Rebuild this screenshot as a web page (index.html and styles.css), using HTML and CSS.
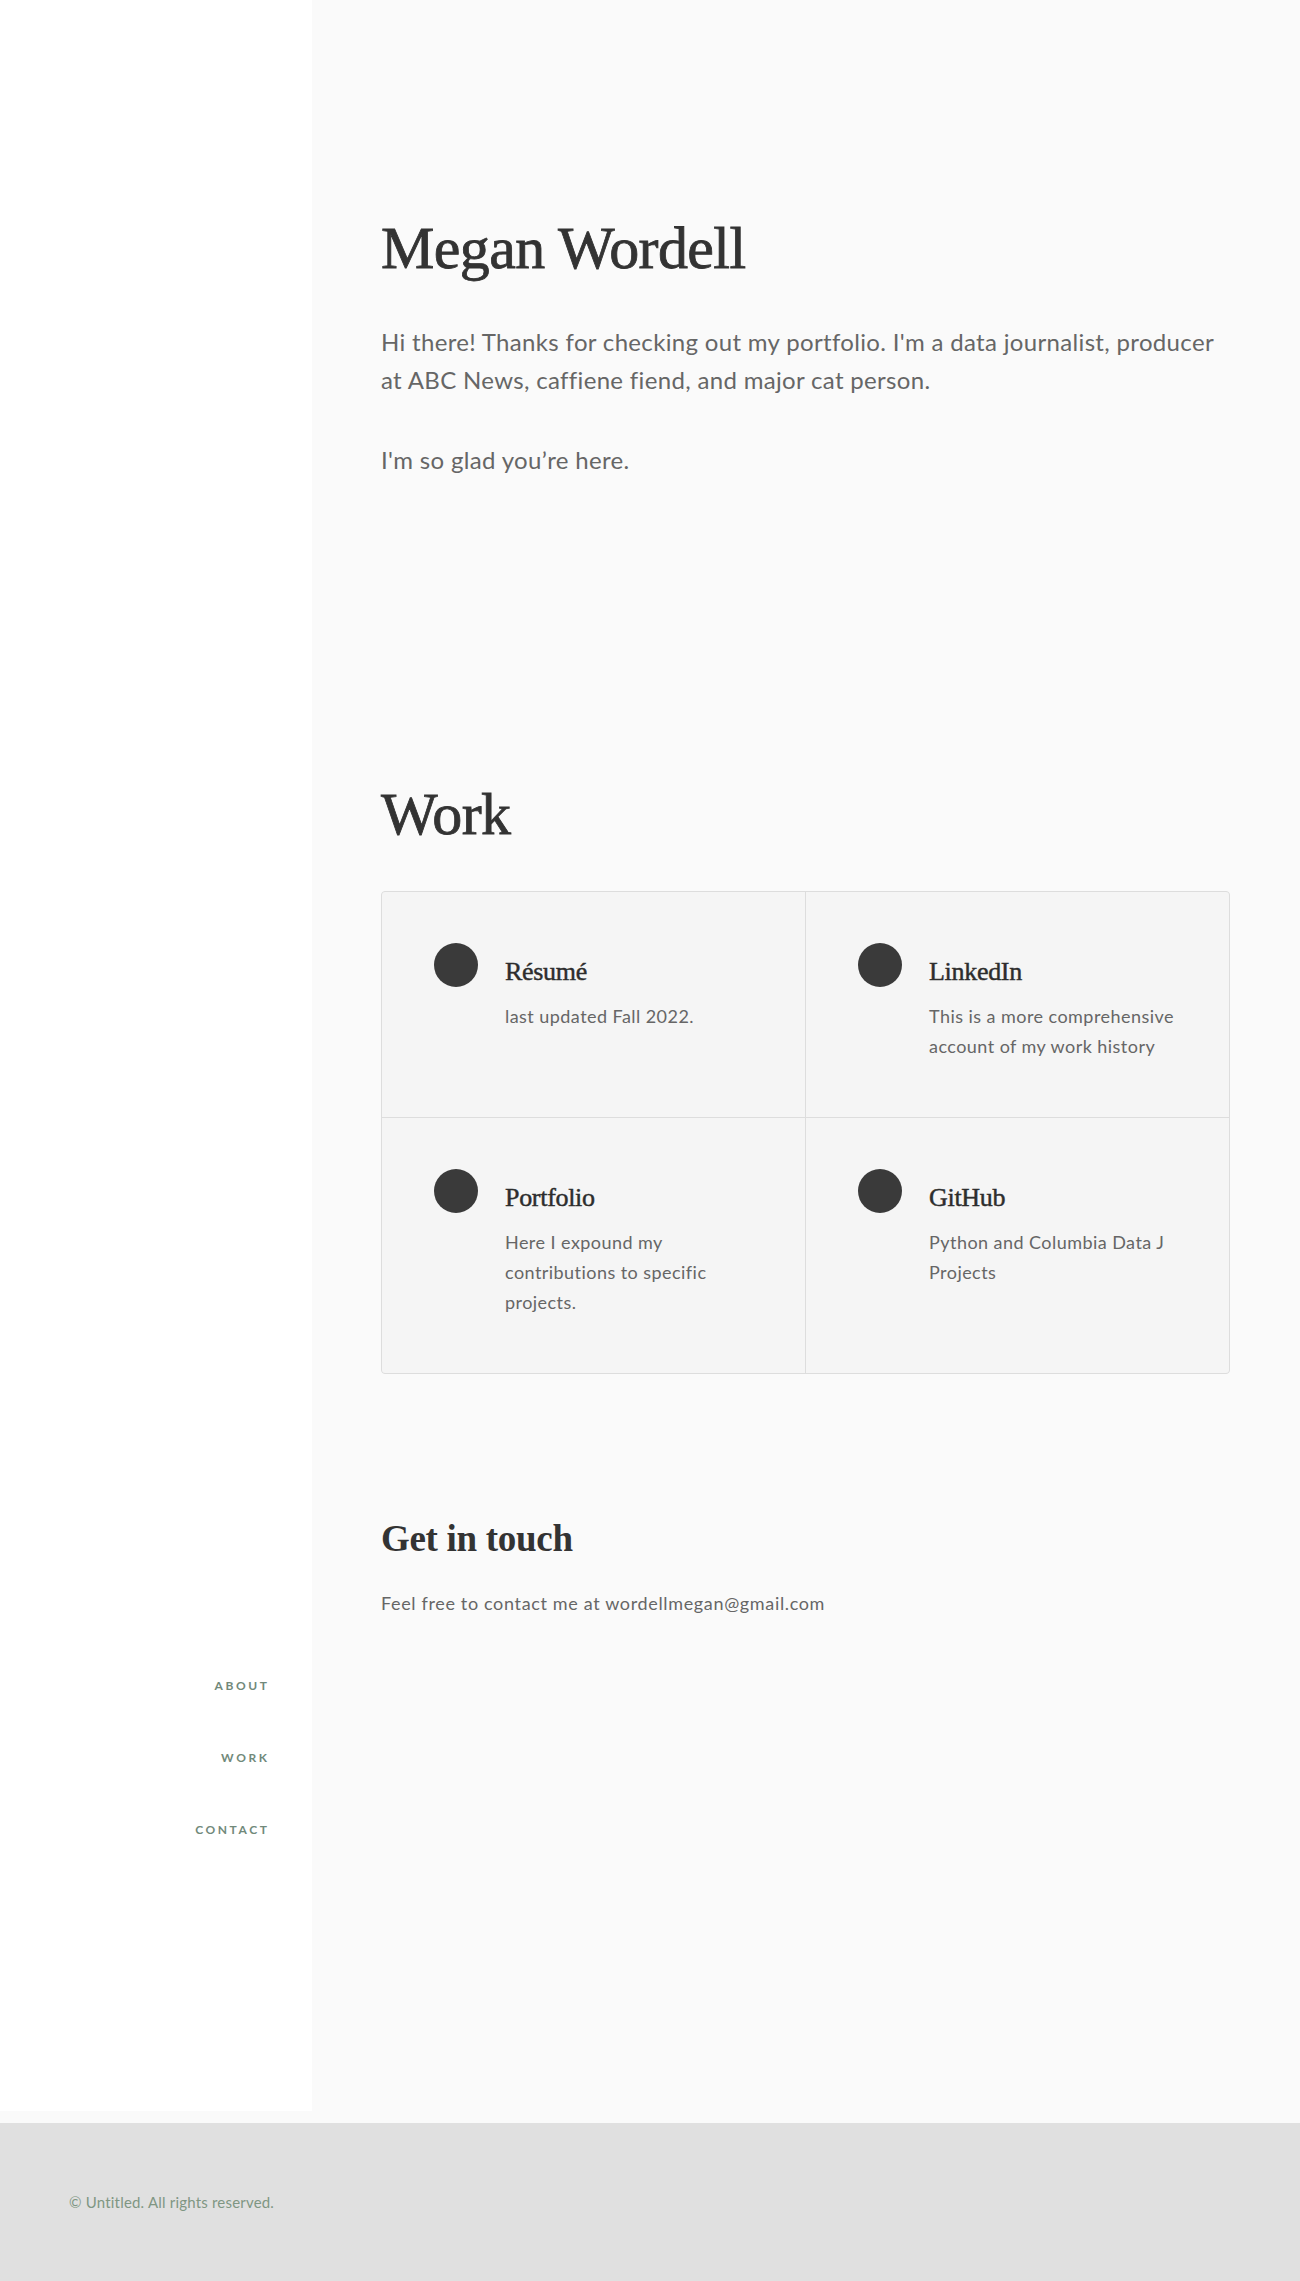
FILE: index.html
```html
<!DOCTYPE html>
<html lang="en">
<head>
<meta charset="utf-8">
<title>Megan Wordell</title>
<link rel="stylesheet" href="styles.css">
</head>
<body>
<div class="page">
  <aside class="sidebar">
    <nav class="nav">
      <a class="nav-link" href="#about">About</a>
      <a class="nav-link" href="#work">Work</a>
      <a class="nav-link" href="#contact">Contact</a>
    </nav>
  </aside>
  <main class="main">
    <section class="intro" id="about">
      <h1 class="title">Megan Wordell</h1>
      <p class="lead">Hi there! Thanks for checking out my portfolio. I'm a data journalist, producer at ABC News, caffiene fiend, and major cat person.</p>
      <p class="lead">I'm so glad you’re here.</p>
    </section>
    <section class="work" id="work">
      <h2 class="section-title">Work</h2>
      <div class="grid">
        <div class="cell">
          <span class="dot"></span>
          <div class="cell-body">
            <h3 class="cell-title">Résumé</h3>
            <p class="cell-text">last updated Fall 2022.</p>
          </div>
        </div>
        <div class="cell">
          <span class="dot"></span>
          <div class="cell-body">
            <h3 class="cell-title">LinkedIn</h3>
            <p class="cell-text">This is a more comprehensive account of my work history</p>
          </div>
        </div>
        <div class="cell">
          <span class="dot"></span>
          <div class="cell-body">
            <h3 class="cell-title">Portfolio</h3>
            <p class="cell-text">Here I expound my contributions to specific projects.</p>
          </div>
        </div>
        <div class="cell">
          <span class="dot"></span>
          <div class="cell-body">
            <h3 class="cell-title">GitHub</h3>
            <p class="cell-text">Python and Columbia Data J Projects</p>
          </div>
        </div>
      </div>
    </section>
    <section class="contact" id="contact">
      <h2 class="contact-title">Get in touch</h2>
      <p class="contact-text">Feel free to contact me at wordellmegan@gmail.com</p>
    </section>
  </main>
</div>
<footer class="footer">
  <p class="copyright">© Untitled. All rights reserved.</p>
</footer>
</body>
</html>
```
FILE: styles.css
```css
* { box-sizing: border-box; }
html, body { margin: 0; padding: 0; }
body {
  background: #fafafa;
  font-family: "Lato", "Liberation Sans", sans-serif;
  color: #666;
}
.page {
  display: grid;
  grid-template-columns: 312px 1fr;
}
.sidebar {
  background: #ffffff;
  padding: 1674px 45px 0 0;
}
.nav {
  display: flex;
  flex-direction: column;
  align-items: flex-end;
  gap: 48px;
}
.nav-link {
  display: block;
  font-size: 12px;
  line-height: 24px;
  font-weight: 700;
  letter-spacing: 2.6px;
  margin-right: -2.6px;
  text-transform: uppercase;
  text-decoration: none;
  color: #71897a;
}
.main {
  padding: 215px 70px 493px 69px;
}
.title, .section-title {
  font-family: "Liberation Serif", serif;
  font-weight: 400;
  font-size: 60px;
  line-height: 66px;
  letter-spacing: -0.6px;
  color: #333;
  -webkit-text-stroke: 0.8px #333;
  margin: 0 0 42px;
}
.lead {
  font-size: 24px;
  line-height: 38px;
  letter-spacing: 0.33px;
  margin: 0 0 42px;
  color: #666;
}
.intro .lead:last-child { margin-bottom: 0; }
.work { margin-top: 302px; }
.section-title { margin-bottom: 44px; }
.grid {
  display: grid;
  grid-template-columns: 1fr 1fr;
  gap: 1px;
  background: #dddddd;
  border: 1px solid #dddddd;
  border-radius: 4px;
  overflow: hidden;
}
.cell {
  background: #f5f5f5;
  display: flex;
  align-items: flex-start;
  padding: 51px 52px 56px 52px;
}
.dot {
  flex: 0 0 44px;
  width: 44px;
  height: 44px;
  border-radius: 50%;
  background: #3a3a3a;
}
.cell-body {
  margin-left: 27px;
  padding-top: 9px;
}
.cell-title {
  font-family: "Liberation Serif", serif;
  font-weight: 400;
  font-size: 26px;
  line-height: 39px;
  color: #2d2d2d;
  -webkit-text-stroke: 0.45px #2d2d2d;
  margin: 0 0 10px;
  letter-spacing: -0.3px;
}
.cell-text {
  font-size: 18px;
  line-height: 30px;
  letter-spacing: 0.45px;
  margin: 0;
  color: #666;
}
.contact { margin-top: 143px; }
.contact-title {
  font-family: "Liberation Serif", serif;
  font-weight: 700;
  font-size: 37px;
  line-height: 44px;
  color: #333;
  margin: 0 0 27px;
  letter-spacing: -0.3px;
}
.contact-text {
  font-size: 18px;
  line-height: 30px;
  letter-spacing: 0.65px;
  margin: 0;
  color: #666;
}
.footer {
  margin-top: 12px;
  background: #e0e0e0;
  padding: 67px 69px;
}
.copyright {
  margin: 0;
  font-size: 15px;
  line-height: 24px;
  letter-spacing: 0.2px;
  color: #7f9683;
}
```
